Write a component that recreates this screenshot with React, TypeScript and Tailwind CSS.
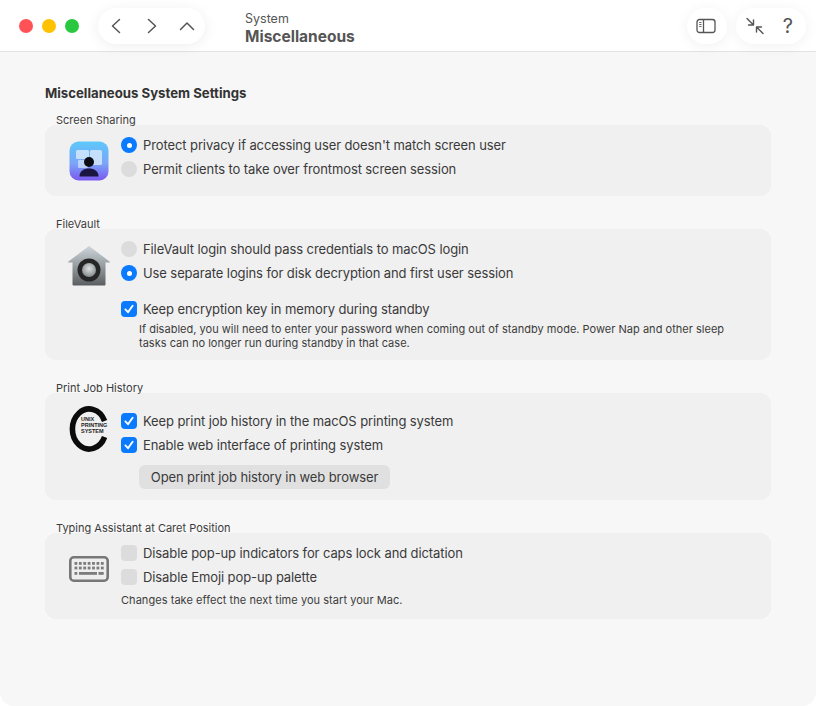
import React from "react";

const font = { fontFamily: "Inter, 'Liberation Sans', sans-serif" };

function Radio({ on }: { on?: boolean }) {
  return on ? (
    <span className="flex h-4 w-4 shrink-0 items-center justify-center rounded-full bg-[#0a7aff]">
      <span className="h-[5px] w-[5px] rounded-full bg-white" />
    </span>
  ) : (
    <span className="h-4 w-4 shrink-0 rounded-full bg-[#dcdcdc]" />
  );
}

function Check({ on }: { on?: boolean }) {
  return on ? (
    <span className="flex h-4 w-4 shrink-0 items-center justify-center rounded-[4px] bg-[#0a7aff]">
      <svg width="12" height="12" viewBox="0 0 12 12" fill="none">
        <path d="M2.4 6.4 L5 9.2 L9.6 2.8" stroke="white" strokeWidth="1.9" strokeLinecap="round" strokeLinejoin="round" />
      </svg>
    </span>
  ) : (
    <span className="h-4 w-4 shrink-0 rounded-[4px] bg-[#dcdcdc]" />
  );
}

function Row({ control, children }: { control: React.ReactNode; children: React.ReactNode }) {
  return (
    <div className="flex h-6 items-center gap-[6px] text-[13px] leading-6 tracking-[-0.1px] text-[#3a3a3a]">
      {control}
      <span>{children}</span>
    </div>
  );
}

function Group({ title, icon, className, children }: { title: string; icon: React.ReactNode; className: string; children: React.ReactNode }) {
  return (
    <section>
      <div className="h-[13px] pl-[11px] text-[11px] leading-[17px] text-[#3c3c3c]">{title}</div>
      <div className={`flex rounded-[11px] bg-[#f0f0f0] pl-[21px] ${className}`}>
        <div className="mr-[9px] flex w-[46px] shrink-0 justify-center">{icon}</div>
        <div className="min-w-0 flex-1">{children}</div>
      </div>
    </section>
  );
}

function ScreenIcon() {
  return (
    <svg width="40" height="40" viewBox="0 0 40 40" className="mt-2">
      <defs>
        <linearGradient id="sg" x1="0" y1="0" x2="0" y2="1">
          <stop offset="0" stopColor="#5cc8fb" />
          <stop offset="0.55" stopColor="#7ba6f8" />
          <stop offset="1" stopColor="#7a58ef" />
        </linearGradient>
      </defs>
      <rect x="0.500" y="0.500" width="39" height="39" rx="9" fill="url(#sg)" />
      <rect x="7" y="9" width="13" height="9" rx="1.5" fill="#d5e8fb" opacity="0.85" />
      <rect x="21" y="9" width="12" height="15" rx="1.5" fill="#d5e8fb" opacity="0.85" />
      <rect x="9" y="19" width="10" height="8" rx="1.2" fill="#d5e8fb" opacity="0.7" />
      <circle cx="20" cy="21" r="5" fill="#0c0c14" />
      <path d="M10.500 35.500 C10.500 30 15 27.500 20 27.500 C25 27.500 29.500 30 29.500 35.500 Z" fill="#1a1640" />
    </svg>
  );
}

function VaultIcon() {
  return (
    <svg width="44" height="44" viewBox="0 0 44 44" className="mt-2">
      <defs>
        <linearGradient id="vg" x1="0" y1="0" x2="0" y2="1">
          <stop offset="0" stopColor="#ccd4d9" />
          <stop offset="0.5" stopColor="#969da1" />
          <stop offset="1" stopColor="#5c5f61" />
        </linearGradient>
        <radialGradient id="vk" cx="0.5" cy="0.4" r="0.6">
          <stop offset="0" stopColor="#e0e3e3" />
          <stop offset="1" stopColor="#838989" />
        </radialGradient>
      </defs>
      <path d="M22 1.500 L42.500 17 L38 17 V40 H6 V17 L1.500 17 Z" fill="url(#vg)" stroke="url(#vg)" strokeWidth="1" strokeLinejoin="round" />
      <circle cx="22" cy="25" r="11.500" fill="#262626" />
      <circle cx="22" cy="25" r="7" fill="url(#vk)" />
    </svg>
  );
}

function CupsIcon() {
  return (
    <svg width="40" height="46" viewBox="0 0 40 46" className="mt-[-3px]" style={{ overflow: "visible" }}>
      <path d="M35.600 15 A16.800 20 0 1 0 35.600 31" fill="none" stroke="#0b0b0b" strokeWidth="5.600" />
      <text x="12" y="15" fontSize="5.500" fontWeight="700" fill="#222" fontFamily="Liberation Sans">UNIX</text>
      <text x="12" y="21" fontSize="5.500" fontWeight="700" fill="#222" fontFamily="Liberation Sans">PRINTING</text>
      <text x="12" y="27" fontSize="5.500" fontWeight="700" fill="#222" fontFamily="Liberation Sans">SYSTEM</text>
    </svg>
  );
}

function KeyboardIcon() {
  const rows = [0, 1];
  return (
    <svg width="40" height="26" viewBox="0 0 40 26" className="mt-[15px]">
      <rect x="1.300" y="1.300" width="37.400" height="23.400" rx="3.500" fill="#eeeeee" stroke="#777777" strokeWidth="2.600" />
      {rows.map((r) =>
        Array.from({ length: 7 }).map((_, i) => (
          <rect key={`${r}-${i}`} x={5.500 + i * 4.400} y={6 + r * 4.600} width="2.800" height="2.800" fill="#7c7c7c" />
        ))
      )}
      <rect x="5.500" y="16" width="2.800" height="2.800" fill="#7c7c7c" />
      <rect x="10" y="16" width="18" height="2.800" fill="#7c7c7c" />
      <rect x="29.500" y="16" width="2.800" height="2.800" fill="#7c7c7c" />
      <rect x="31.900" y="16" width="2.800" height="2.800" fill="#7c7c7c" />
    </svg>
  );
}

export default function App() {
  return (
    <div style={font} className="flex h-[706px] w-[816px] flex-col overflow-hidden rounded-b-[14px] bg-[#f7f7f7] antialiased">
      <header className="flex h-[52px] shrink-0 items-center border-b border-[#e2e2e2] bg-white">
        <div className="ml-[19px] flex gap-[9px]">
          <span className="h-[14px] w-[14px] rounded-full bg-[#ff5257]" />
          <span className="h-[14px] w-[14px] rounded-full bg-[#fec200]" />
          <span className="h-[14px] w-[14px] rounded-full bg-[#2ac840]" />
        </div>
        <div className="ml-[19px] flex h-9 w-[107px] items-center rounded-full bg-white pl-[11px] text-[#555] shadow-[0_2px_14px_rgba(0,0,0,0.07)]">
          <svg width="14" height="18" viewBox="0 0 14 18" fill="none" stroke="currentColor" strokeWidth="1.500" strokeLinecap="round" strokeLinejoin="round"><path d="M10.500 2.500 L3.500 9 L10.500 15.500" /></svg>
          <svg width="14" height="18" viewBox="0 0 14 18" fill="none" stroke="currentColor" strokeWidth="1.500" strokeLinecap="round" strokeLinejoin="round" className="ml-[22px]"><path d="M3.500 2.500 L10.500 9 L3.500 15.500" /></svg>
          <svg width="18" height="14" viewBox="0 0 18 14" fill="none" stroke="currentColor" strokeWidth="1.500" strokeLinecap="round" strokeLinejoin="round" className="ml-[19px]"><path d="M2.500 10.500 L9 4 L15.500 10.500" /></svg>
        </div>
        <div className="ml-10 mt-[7px] flex flex-col text-[#555]">
          <span className="text-[12.500px] leading-[15px]">System</span>
          <span className="text-[15.500px] font-bold leading-[21px]">Miscellaneous</span>
        </div>
        <div className="ml-auto flex items-center gap-[9px] pr-[10px]">
          <div className="flex h-9 w-[40px] items-center justify-center rounded-full bg-white pr-[2px] shadow-[0_2px_14px_rgba(0,0,0,0.06)]">
            <svg width="20" height="16" viewBox="0 0 20 16" fill="none" stroke="#555" strokeWidth="1.300">
              <rect x="1" y="1.500" width="18" height="13" rx="2.500" />
              <path d="M7.500 1.500 V14.500" />
              <path d="M3.200 4.500 H5.500 M3.200 6.500 H5.500 M3.200 8.500 H5.500" strokeWidth="0.900" />
            </svg>
          </div>
          <div className="flex h-9 w-[70px] items-center justify-between rounded-full bg-white pl-[9px] pr-[13px] text-[#555] shadow-[0_2px_14px_rgba(0,0,0,0.06)]">
            <svg width="20" height="20" viewBox="0 0 20 20" fill="none" stroke="#555" strokeWidth="1.400" strokeLinecap="round" strokeLinejoin="round">
              <path d="M2 2.500 L8.500 9 M8.500 4 V9 H3.500" />
              <path d="M18 17.500 L11.500 11 M11.500 16 V11 H16.500" />
            </svg>
            <span className="text-[20px] leading-none text-[#555]">?</span>
          </div>
        </div>
      </header>

      <main className="px-[45px] pt-[33px]">
        <h1 className="text-[13.200px] font-bold leading-4 text-[#333]">Miscellaneous System Settings</h1>

        <div className="mt-[11px] flex flex-col gap-[20px]">
          <Group title="Screen Sharing" icon={<ScreenIcon />} className="h-[71px] pt-2">
            <Row control={<Radio on />}>Protect privacy if accessing user doesn't match screen user</Row>
            <Row control={<Radio />}>Permit clients to take over frontmost screen session</Row>
          </Group>

          <Group title="FileVault" icon={<VaultIcon />} className="h-[131px] pt-2">
            <Row control={<Radio />}>FileVault login should pass credentials to macOS login</Row>
            <Row control={<Radio on />}>Use separate logins for disk decryption and first user session</Row>
            <div className="mt-3">
              <Row control={<Check on />}>Keep encryption key in memory during standby</Row>
            </div>
            <p className="ml-[18px] mt-px w-[592px] text-[11px] leading-[14px] tracking-[0.02px] text-[#3c3c3c]">
              If disabled, you will need to enter your password when coming out of standby mode. Power Nap and other sleep tasks can no longer run during standby in that case.
            </p>
          </Group>

          <Group title="Print Job History" icon={<CupsIcon />} className="h-[107px] pt-4">
            <Row control={<Check on />}>Keep print job history in the macOS printing system</Row>
            <Row control={<Check on />}>Enable web interface of printing system</Row>
            <button className="ml-[18px] mt-2 block h-6 w-[251px] rounded-[6px] bg-[#e0e0e0] text-center text-[13px] leading-6 tracking-[-0.1px] text-[#3a3a3a]">
              Open print job history in web browser
            </button>
          </Group>

          <Group title="Typing Assistant at Caret Position" icon={<KeyboardIcon />} className="h-[86px] pt-2">
            <Row control={<Check />}>Disable pop-up indicators for caps lock and dictation</Row>
            <Row control={<Check />}>Disable Emoji pop-up palette</Row>
            <p className="mt-1 text-[11px] leading-[15px] tracking-[0.05px] text-[#3c3c3c]">Changes take effect the next time you start your Mac.</p>
          </Group>
        </div>
      </main>
    </div>
  );
}
